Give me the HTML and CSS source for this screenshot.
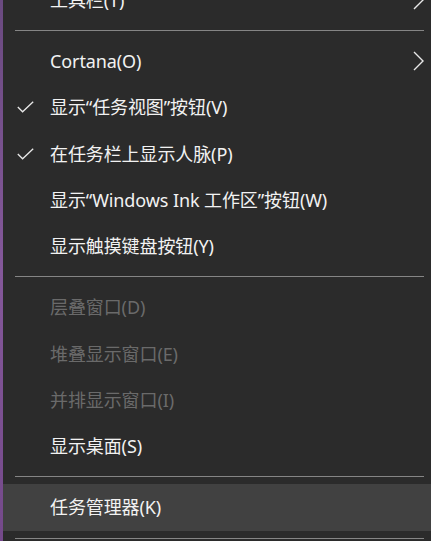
FILE: index.html
```html
<!DOCTYPE html>
<html lang="zh-CN">
<head>
<meta charset="utf-8">
<link rel="stylesheet" href="styles.css">
</head>
<body>
<div class="menu">
  <div class="item"><span class="label">工具栏(T)</span><svg class="chev" viewBox="0 0 11 20"><path d="M1 1 L10 10 L1 19" /></svg></div>
  <div class="sep"></div>
  <div class="item"><span class="label">Cortana(O)</span><svg class="chev" viewBox="0 0 11 20"><path d="M1 1 L10 10 L1 19" /></svg></div>
  <div class="item"><svg class="check" viewBox="0 0 17 12"><path d="M0.8 6 L5.6 10.8 L16.2 0.8" /></svg><span class="label">显示“任务视图”按钮(V)</span></div>
  <div class="item"><svg class="check" viewBox="0 0 17 12"><path d="M0.8 6 L5.6 10.8 L16.2 0.8" /></svg><span class="label">在任务栏上显示人脉(P)</span></div>
  <div class="item"><span class="label">显示“Windows Ink 工作区”按钮(W)</span></div>
  <div class="item"><span class="label">显示触摸键盘按钮(Y)</span></div>
  <div class="sep"></div>
  <div class="item disabled"><span class="label">层叠窗口(D)</span></div>
  <div class="item disabled"><span class="label">堆叠显示窗口(E)</span></div>
  <div class="item disabled"><span class="label">并排显示窗口(I)</span></div>
  <div class="item"><span class="label">显示桌面(S)</span></div>
  <div class="sep"></div>
  <div class="item hover"><span class="label">任务管理器(K)</span></div>
  <div class="sep"></div>
</div>
</body>
</html>
```
FILE: styles.css
```css
html, body {
  margin: 0;
  padding: 0;
  height: 100%;
  overflow: hidden;
}
body {
  background: linear-gradient(180deg, #6a4a80 0%, #84589a 50%, #74498a 100%);
}
.menu {
  margin-left: 3px;
  margin-top: -23.25px;
  background: #2b2b2b;
  height: calc(100vh + 23.25px);
  overflow: hidden;
  font-family: "Noto Sans", "Noto Sans CJK SC", sans-serif;
  font-size: 18px;
  color: #f2f2f2;
}
.item {
  position: relative;
  height: 46.25px;
  display: flex;
  align-items: center;
  padding-left: 47px;
}
.item.disabled {
  color: #6a6a6a;
}
.item.hover {
  background: #414141;
}
.label {
  white-space: nowrap;
  line-height: 1;
  letter-spacing: -0.1px;
}
.sep {
  height: 1px;
  margin: 7px 7px 7px 12px;
  background: #858585;
}
.check {
  position: absolute;
  left: 14px;
  top: 50%;
  width: 17px;
  height: 12px;
  margin-top: -6px;
  fill: none;
  stroke: #e8e8e8;
  stroke-width: 1.3;
}
.chev {
  position: absolute;
  right: 7px;
  top: 50%;
  width: 11px;
  height: 20px;
  margin-top: -10px;
  fill: none;
  stroke: #e8e8e8;
  stroke-width: 1.4;
}
```
